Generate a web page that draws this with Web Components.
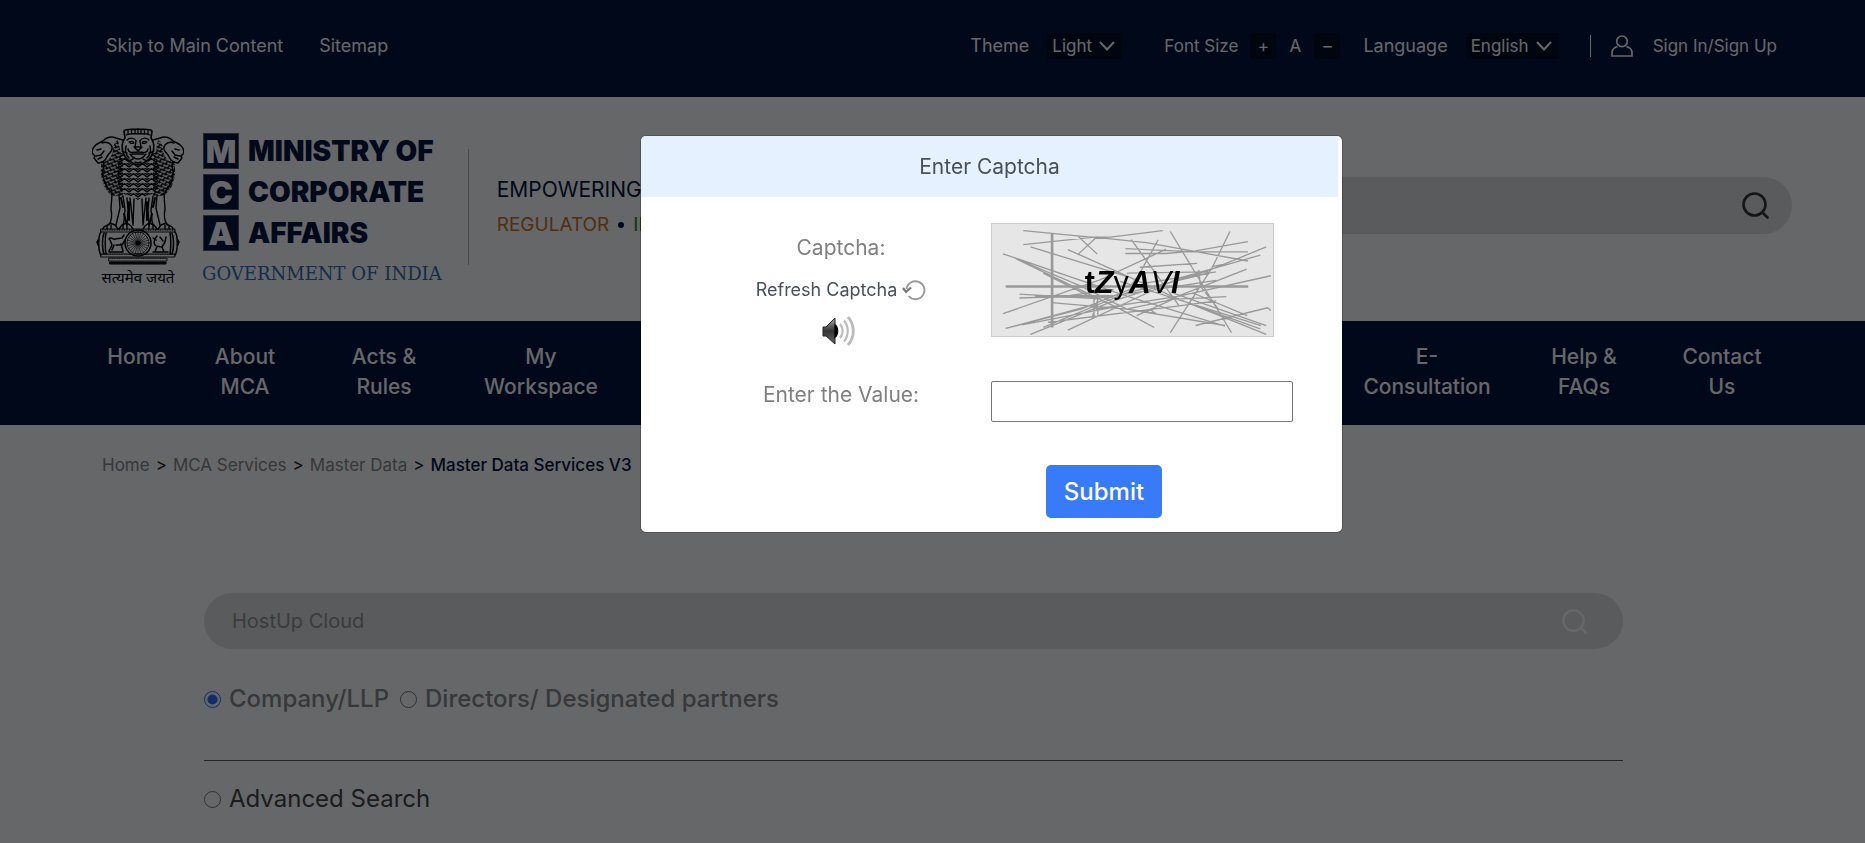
<!DOCTYPE html>
<html lang="en">
<head>
<meta charset="utf-8">
<title>Master Data Services V3 - MCA</title>
<style>
html, body { margin: 0; }
body { font-family: Inter, "Noto Sans", sans-serif; font-size: 18px; line-height: 24px; background: #fff; color: #444; min-height: 100vh; }
</style>
</head>
<body>
<mca-topbar></mca-topbar>
<mca-header>
  <mca-logo slot="logo"></mca-logo>
  <mca-search slot="search" label="Search this site"></mca-search>
</mca-header>
<mca-nav></mca-nav>
<mca-breadcrumb></mca-breadcrumb>
<mca-master-data>
  <mca-search slot="search" muted label="Company name" value="HostUp Cloud"></mca-search>
</mca-master-data>
<captcha-modal><span slot="title">Enter Captcha</span><captcha-image slot="image"></captcha-image></captcha-modal>

<script>
const base = `:host,*{box-sizing:border-box}a{color:inherit;text-decoration:none}
button,input,select{font:inherit;color:inherit;margin:0}svg{display:block}`;

function define(name, html) {
  customElements.define(name, class extends HTMLElement {
    constructor() {
      super();
      this.attachShadow({ mode: 'open' }).innerHTML = '<style>' + base + '</style>' +
        (typeof html === 'function' ? html(this) : html);
    }
  });
}

const chevron = `<svg width="16" height="10" viewBox="0 0 16 10" fill="none" stroke="#fff" stroke-width="2"><path d="M1 1l7 7.500 7-7.500"/></svg>`;

define('mca-topbar', `<style>
:host{display:flex;align-items:center;height:97px;padding:0 88px 5px 106px;background:#03123a;color:#fff}
.skip{display:flex;gap:36px}
.tools{display:flex;align-items:center;margin-left:auto}
.group{display:flex;align-items:center}
.pick{display:grid;align-items:center;background:#020d22;font-size:17px}
.pick>*{grid-area:1/1}
.pick svg{justify-self:end;margin-right:7px;pointer-events:none}
select{appearance:none;border:0;background:none;height:26px;padding:0 30px 0 5px;outline:0}
option{color:#222}
button{width:26px;height:26px;border:0;padding:0;background:#020d22}
.plain{background:none}
.theme,.lang{gap:18px}
.size{margin:0 23px 0 42px;gap:6px;font-size:17px}
.size span{margin-right:6px}
.sign{display:flex;align-items:center;gap:20px;margin-left:31px;font-size:17px}
.sign i{width:1px;height:22px;background:#fff}
</style>
<div class="skip"><a href="#main">Skip to Main Content</a><a href="#sitemap">Sitemap</a></div>
<div class="tools">
  <div class="group theme"><label for="t">Theme</label><span class="pick"><select id="t"><option>Light</option></select>${chevron}</span></div>
  <div class="group size"><span>Font Size</span><button>+</button><button class="plain">A</button><button>–</button></div>
  <div class="group lang"><label for="l">Language</label><span class="pick"><select id="l"><option>English</option></select>${chevron}</span></div>
  <div class="sign"><i></i>
    <svg width="22" height="22" viewBox="0 0 22 22" fill="none" stroke="#fff" stroke-width="1.700"><circle cx="11" cy="6.300" r="5.300"/><path d="M6.500 11.500C3 12.500 1 15 1 18v3h20v-3c0-3-2-5.500-5.500-6.500"/></svg>
    <a href="#login">Sign In/Sign Up</a></div>
</div>`);

define('mca-header', `<style>
:host{display:flex;align-items:flex-start;height:224px;padding:31px 73px 0 92px}
.tag{margin:21px 0 0 26px;height:116px;border-left:1px solid #b0b4ba;padding:22px 0 0 28px;white-space:nowrap}
p{margin:0}
.big{font-size:21px;line-height:38px;color:#03123a}
.small{display:flex;align-items:center;gap:9px;font-size:19px;line-height:32px;color:#cb7417}
b{width:6px;height:6px;border-radius:50%;background:#03123a}
.green{color:#11863c}
.find{width:600px;margin:49px 0 0 auto}
</style>
<slot name="logo"></slot>
<div class="tag"><p class="big">EMPOWERING</p><p class="small"><span>REGULATOR</span><b></b><span class="green">IN</span></p></div>
<div class="find"><slot name="search"></slot></div>`);

/* State emblem: the manes are filled with a repeating chevron of fur. */
function emblem() {
  let spokes = '';
  for (let i = 0; i < 24; i++) {
    const a = i * Math.PI / 12;
    spokes += `M46 115L${(46 + 11 * Math.cos(a)).toFixed(1)} ${(115 + 11 * Math.sin(a)).toFixed(1)}`;
  }
  return `<svg width="92" height="137" viewBox="0 0 92 137" fill="none" stroke="#000" stroke-linecap="round" stroke-linejoin="round">
  <defs>
    <pattern id="furL" width="4.600" height="4.600" patternUnits="userSpaceOnUse" patternTransform="rotate(24)"><path d="M0 1l2.300 2.600L4.600 1M0 4.600l1.500 0" stroke-width="1.500"/></pattern>
    <pattern id="furR" width="4.600" height="4.600" patternUnits="userSpaceOnUse" patternTransform="rotate(-24)"><path d="M0 1l2.300 2.600L4.600 1M4.600 4.600l-1.500 0" stroke-width="1.500"/></pattern>
    <pattern id="furC" x="46" width="9" height="5" patternUnits="userSpaceOnUse"><path d="M0 4l4.500-3.400L9 4M0 1.500l2-1.300M9 1.500L7 .2" stroke-width="1.400"/></pattern>
    <pattern id="bead" width="2.400" height="4" patternUnits="userSpaceOnUse"><circle cx="1.200" cy="2" r=".8" fill="#000" stroke="none"/></pattern>
  </defs>
  <path d="M26 12C20 14 22 22 20 26 18 32 13 33 9 36c0 7-1 12 2 18 1 6 5 10 8 13l12 2V35z" fill="url(#furL)" stroke="none"/>
  <path d="M66 12c6 2 4 10 6 14 2 6 7 7 11 10 0 7 1 12-2 18-1 6-5 10-8 13l-12 2V35z" fill="url(#furR)" stroke="none"/>
  <path d="M30 22c-5 14-7 30-1 43l12 4 5 3 5-3 12-4c6-13 4-29-1-43l-7 12-9 4-9-4z" fill="url(#furC)" stroke="none"/>
  <path d="M31 12l-7-2c-5-2-10 0-13 3l-4 2c-4 2-7 6-7 10l3 3-1 2 4 5 5-1c2 2 1 5 0 8-1 8 3 17 8 22l3 3M61 12l7-2c5-2 10 0 13 3l4 2c4 2 7 6 7 10l-3 3 1 2-4 5-5-1c-2 2-1 5 0 8 1 8-3 17-8 22l-3 3" stroke-width="1.500"/>
  <path d="M10 15c4-2 9 0 10 4s-2 5-4 8-2 6-6 7M5 22l4-1M4 28l5-1 3-4M6 31l4-2M82 15c-4-2-9 0-10 4s2 5 4 8 2 6 6 7M87 22l-4-1M88 28l-5-1-3-4M86 31l-4-2" stroke-width="1.500"/>
  <path d="M32 3c3-3 9-1 14-2 5 1 11-1 14 2l-1 7c4 5 3 12 1 17-3 6-8 8-14 10-6-2-11-4-14-10-2-5-3-12 1-17z" stroke-width="1.700"/>
  <path d="M34 7c4-2 20-2 24 0M36 2v4M39.500 2v4M43 2v4M46 2v4M49 2v4M52.500 2v4M56 2v4" stroke-width="1.300"/>
  <path d="M35 12c3-3 8-2 9 1M57 12c-3-3-8-2-9 1M37 14c2-1 4-1 5 1-2 1-4 0-5-1zM55 14c-2-1-4-1-5 1 2 1 4 0 5-1z" stroke-width="1.200"/>
  <path d="M44 13l-1 6h6l-1-6M42 19h8l-4 4zM46 22v2M36 21c1 5 5 3 10 3 5 0 9 2 10-3M38 26c3 4 5 5 8 5s5-1 8-5M40 26h12" stroke-width="1.400"/>
  <path d="M34 18c-1 4 0 9 3 12M58 18c1 4 0 9-3 12M37 33l4-2M55 33l-4-2M43 34l3 1 3-1M32 24l3 1M60 24l-3 1" stroke-width="1.500"/>
  <path d="M20 66l-1 15c1 5 1 11-2 16M27 67l1 13-4 17M31 68l2 14c-1 6 0 10-2 15M35 70l1 12-1 15M38 70l3 27M42 71l-1 26M50 71l1 26M54 70l-3 27M57 70l-1 12 1 15M61 68l-2 14c1 6 0 10 2 15M65 67l-1 13 4 17M72 66l1 15c-1 5-1 11 2 16" stroke-width="1.400"/>
  <path d="M29 70l2 9M63 70l-2 9M37 74v18M55 74v18M32 86l2 8M60 86l-2 8" stroke-width="2"/>
  <path d="M11 101c0-3 3-3 5-4l2-2 5 2 3 4M15 98v3M19 97v4M27 101l3-4 5-2 4 3 2 3M31 97v4M35 96v5M81 101c0-3-3-3-5-4l-2-2-5 2-3 4M77 98v3M73 97v4M65 101l-3-4-5-2-4 3-2 3M61 97v4M57 96v5" stroke-width="1.400"/>
  <path d="M9 101h74v3H9zM9 126h74v3H9z" fill="url(#bead)" stroke-width=".9"/>
  <path d="M9 104c-3 3-3 19 0 23M83 104c3 3 3 19 0 23M12 105c-2 5-2 16 0 21M80 105c2 5 2 16 0 21M14 105c-1 5-1 16 0 21M78 105c1 5 1 16 0 21M6 112l-1 2 1 3M86 112l1 2-1 3" stroke-width="1.500"/>
  <path d="M17 111c2-3 4 1 6 0l7-1 2-3M18 112l2 5-3 6M22 117l-2 5M29 116l2 7M24 117h6l3-5M17 124h14M65 108c-3 3-4 8-1 10l6 1 3-5 1-5M65 118l-2 6M70 119l2 5M61 110l3 2M68 109l3 4M61 124h15" stroke-width="1.500"/>
  <circle cx="46" cy="115" r="13" stroke-width="1.600"/><circle cx="46" cy="115" r="11" stroke-width=".7"/>
  <path d="${spokes}" stroke-width=".6"/><circle cx="46" cy="115" r="2" fill="#000"/>
  <path d="M17 130h58v3H17z" fill="url(#bead)" stroke-width=".8"/><path d="M18 134h56v2H18z" fill="#222" stroke-width="1"/>
  </svg>`;
}

define('mca-logo', `<style>
:host{display:flex;gap:18px;flex:none}
figure{margin:0;width:92px}
figcaption{font-family:"Noto Sans",sans-serif;font-size:15px;line-height:20px;text-align:center;color:#000;margin-top:2px;white-space:nowrap}
.words{padding-top:5px;color:#04153b}
.row{display:flex;align-items:center;gap:9px;height:36px;margin:0 0 5px 1px;font-weight:900;font-size:28px;line-height:36px;white-space:nowrap}
.row b{display:grid;place-items:center;width:36px;height:36px;background:#04153b;border:1px solid #56607a;color:#fff;font-size:32px;font-weight:900}
.gov{font-family:"DejaVu Serif",serif;font-size:18px;line-height:18px;color:#2c6fb0;margin:14px 0 0;white-space:nowrap}
</style>
<figure>${emblem()}<figcaption lang="hi">सत्यमेव जयते</figcaption></figure>
<div class="words">
<div class="row"><b>M</b><span>MINISTRY OF</span></div>
<div class="row"><b>C</b><span>CORPORATE</span></div>
<div class="row"><b>A</b><span>AFFAIRS</span></div>
<div class="gov">GOVERNMENT OF INDIA</div>
</div>`);

define('mca-search', el => `<style>
:host{display:block}
form{display:flex;align-items:center;height:57px;border-radius:29px;background:#e1e1e1;padding:0 23px 0 28px}
input{flex:1;min-width:0;border:0;background:none;outline:0;font-size:20px;color:#919191;padding:0}
button{border:0;background:none;padding:0;color:#333}
:host([muted]) form{height:56px;padding-right:36px}
:host([muted]) button{color:#fff}
:host([muted]) svg{width:25px;height:25px}
</style>
<form><input type="text" aria-label="${el.getAttribute('label')}" value="${el.getAttribute('value') || ''}">
<button type="button" aria-label="Search"><svg width="27" height="27" viewBox="0 0 27 27" fill="none" stroke="currentColor" stroke-width="2.600" stroke-linecap="round"><circle cx="12.500" cy="12.500" r="11"/><path d="M20.500 20.500l5 5"/></svg></button></form>`);

define('mca-nav', `<style>
:host{display:block;background:#03123a;color:#fff;font-size:21px;font-weight:500;line-height:30px}
nav{display:flex;justify-content:space-between;height:104px;padding:21px 96px 0 107px}
div{display:grid;column-gap:32px;text-align:center;align-content:start}
.a{grid-template-columns:60px 92px 122px 128px}
.b{grid-template-columns:132px 118px 94px}
a{display:block}
</style>
<nav><div class="a"><a href="#h">Home</a><a href="#a">About<br>MCA</a><a href="#r">Acts &amp;<br>Rules</a><a href="#w">My<br>Workspace</a></div>
<div class="b"><a href="#e">E-<br>Consultation</a><a href="#f">Help &amp;<br>FAQs</a><a href="#c">Contact<br>Us</a></div></nav>`);

define('mca-breadcrumb', `<style>
:host{display:block;padding:28px 102px 0;font-size:17px;line-height:24px;color:#888}
nav{display:flex;gap:6px}
i{font-style:normal;color:#222}
b{font-weight:500;color:#03123a}
</style>
<nav aria-label="Breadcrumb"><a href="#h">Home</a><i>&gt;</i><a href="#s">MCA Services</a><i>&gt;</i><a href="#m">Master Data</a><i>&gt;</i><b>Master Data Services V3</b></nav>`);

define('mca-master-data', `<style>
:host{display:block;padding:116px 242px 0 204px;font-size:24px;line-height:32px}
.kind{display:flex;align-items:center;margin-top:34px;color:#8a8a8a;font-weight:500}
input{width:17px;height:17px;flex:none;accent-color:#2a6fff}
label{margin:0 11px 0 8px}
hr{margin:45px 0 22px;border:0;border-top:1px solid #4d5b66}
.adv{display:flex;align-items:center;color:#444}
</style>
<main><slot name="search"></slot>
<div class="kind"><input type="radio" name="k" id="co" checked><label for="co">Company/LLP</label><input type="radio" name="k" id="di"><label for="di">Directors/ Designated partners</label></div>
<hr>
<div class="adv"><input type="radio" id="ad"><label for="ad">Advanced Search</label></div></main>`);

define('captcha-image', `<style>:host{display:block}svg{background:#e6e6e6;border:1px solid #ccc}</style>
<svg width="283" height="114" viewBox="0 0 283 114" role="img" aria-label="Captcha">
<g transform="scale(.3333) translate(-33 -40)" fill="none" stroke="#999" stroke-width="4">
<path d="M212 68V356M70 231H811M160 261H400" stroke-width="8"/>
<path d="M124 60L330 80H390L550 60M124 103L340 80L500 97L810 153M146 110L440 200M62 131L440 260L740 352M62 314L360 210L560 117M292 132L350 78M292 78L350 132M260 118L600 270M185 190L345 270M100 145L420 300L524 356M454 88L600 290M536 88L480 190L455 225M436 115L650 125H810M436 130L560 130L650 122L810 94M573 63L760 372M755 63L700 175L573 372M480 172L655 160M866 110L700 178L400 275L146 377M848 135L600 205L260 364M806 178L560 275L440 300M880 198L600 260L346 300M713 212L345 268L112 254M112 266L240 262L400 240M70 359L300 300L500 220L713 186M120 348L420 290M185 356L440 250L690 190M210 280L440 300L740 350M650 350L870 296L880 304M470 320L580 270L744 262M600 270L866 377M650 290L848 360M640 250L808 320M660 180L665 230L720 300M440 190L690 186M340 260V320M352 270L334 326M350 260L352 320M200 340L600 290L713 275M70 359L345 285M100 145L300 230L440 300L530 312M420 215L850 350M500 312L512 300L528 314M580 250L866 350M700 170L750 160M735 330L755 330"/></g>
<text x="93" y="70" font-family="Liberation Sans, Arial, sans-serif" font-size="31" font-weight="700" fill="#000">t<tspan font-style="italic">Z</tspan><tspan font-weight="400">y</tspan><tspan font-style="italic">A</tspan><tspan font-style="italic" font-weight="400">V</tspan><tspan font-style="italic">I</tspan></text>
</svg>`);

define('captcha-modal', `<style>
:host{position:fixed;inset:0;display:flex;justify-content:center;align-items:flex-start;padding:136px 0 0 118px;background:rgb(0 2 5/.6)}
dialog{position:static;display:block;margin:0;width:701px;padding:0;border:0;border-radius:5px;background:#fff;color:#495057;box-shadow:0 0 0 1px rgb(0 0 0/.2);overflow:hidden}
h2{margin:0 4px 0 0;background:#e6f1ff;font-size:21px;font-weight:400;line-height:61px;text-align:center}
form{display:grid;grid-template-columns:300px 302px;padding:26px 0 14px 50px}
.side{display:flex;flex-direction:column;align-items:center;padding-top:10px}
.cap{font-size:21px;line-height:30px;color:#808080;text-align:center}
.re{display:flex;align-items:center;gap:5px;margin:15px 0 14px;padding:0;border:0;background:none;line-height:24px}
.snd{border:0;background:none;padding:0 4px 0 0}
.value{margin-top:35px;line-height:28px}
input{margin-top:35px;height:41px;border:1px solid #767676;border-radius:2px;padding:0 8px;outline:0}
.send{grid-column:2;justify-self:start;margin:43px 0 0 55px;width:116px;height:53px;border:0;border-radius:5px;background:#377bfa;color:#fff;font-size:24px;font-weight:500;padding:0}
</style>
<dialog open aria-labelledby="ttl"><h2 id="ttl"><slot name="title"></slot></h2>
<form>
<div class="side"><span class="cap">Captcha:</span>
<button type="button" class="re">Refresh Captcha<svg width="24" height="22" viewBox="0 0 24 22" fill="none" stroke="#999" stroke-width="1.900"><path d="M4.500 10A9 9 0 1 1 6.500 17"/><path d="M1 9l3 4 5-4.500" stroke="#777" stroke-width="2.200"/></svg></button>
<button type="button" class="snd" aria-label="Play captcha"><svg width="34" height="30" viewBox="0 0 34 30"><defs><linearGradient id="g" x2="0" y2="1"><stop offset="0" stop-color="#aaa"/><stop offset=".5" stop-color="#333"/><stop offset="1" stop-color="#666"/></linearGradient></defs>
<path d="M1 11h3l9-9v26l-9-8H1z" fill="url(#g)" stroke="#222"/><path d="M12.500 8c5 1 5 13 0 14z" fill="#000"/>
<g fill="none" stroke="#bbb" stroke-width="2.200"><path d="M18 8c3.500 4 3.500 10 0 14"/><path d="M22 4.500c5 6 5 15 0 21"/><path d="M26 1c7 8 7 20 0 28" stroke-width="2.800"/></g></svg></button></div>
<slot name="image"></slot>
<label class="cap value" for="v">Enter the Value:</label><input id="v" type="text">
<button type="button" class="send">Submit</button>
</form></dialog>`);
</script>
</body>
</html>
